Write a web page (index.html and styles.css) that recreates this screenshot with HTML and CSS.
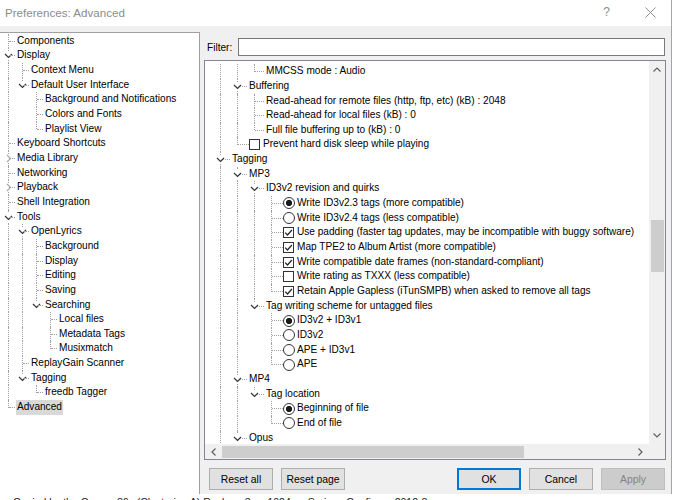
FILE: index.html
```html
<!DOCTYPE html>
<html>
<head>
  <title>Preferences: Advanced</title>
  <link rel="stylesheet" href="styles.css">
</head>
<body>

<div class="window">
  <div class="titlebar">
    <span class="title">Preferences: Advanced</span>
    <span class="help">?</span>
    <svg class="close" width="11" height="11" viewBox="0 0 11 11"><path d="M0.5 0.5l10 10M10.5 0.5l-10 10"/></svg>
  </div>

  <div class="client">
    <div class="nav tree" id="navTree"></div>

    <div class="pane">
      <div class="filter">
        <label for="filter">Filter:</label>
        <input type="text" id="filter" name="filter">
      </div>

      <div class="tree-box">
        <div class="viewport prefs tree" id="prefTree"></div>
        <div class="vscroll">
          <div class="sbtn"><svg width="8" height="5" viewBox="0 0 8 5"><path d="M0.5 4.5l3.5-3.5 3.5 3.5"/></svg></div>
          <div class="vtrack"><div class="vthumb"></div></div>
          <div class="sbtn"><svg width="8" height="5" viewBox="0 0 8 5"><path d="M0.5 0.5l3.5 3.5 3.5-3.5"/></svg></div>
        </div>
        <div class="hscroll">
          <div class="sbtn"><svg width="5" height="8" viewBox="0 0 5 8"><path d="M4.5 0.5l-3.5 3.5 3.5 3.5"/></svg></div>
          <div class="htrack"><div class="hthumb"></div></div>
          <div class="sbtn"><svg width="5" height="8" viewBox="0 0 5 8"><path d="M0.5 0.5l3.5 3.5-3.5 3.5"/></svg></div>
        </div>
        <div class="corner"></div>
      </div>

      <div class="buttons">
        <button type="button">Reset all</button>
        <button type="button">Reset page</button>
        <span class="spacer"></span>
        <button type="button" class="default">OK</button>
        <button type="button">Cancel</button>
        <button type="button" disabled>Apply</button>
      </div>
    </div>
  </div>
</div>

<div class="status">Copied by the Corvax 86s (Clustering A) Rockers 3ms 1024ms Serious Configure 2012-8</div>

<script src="tree.js"></script>
</body>
</html>
```

FILE: styles.css
```css
* {
  box-sizing: border-box;
}

body {
  margin: 0;
  background: #fff;
  font-family: "Liberation Sans", Arial, sans-serif;
  font-size: 10.1px;
  color: #000;
}

.window {
  width: 672px;
  height: 494px;
  border-right: 1px solid #a5a5a5;
  display: flex;
  flex-direction: column;
}

/* title bar */

.titlebar {
  height: 26px;
  display: flex;
  align-items: center;
  padding: 0 15px 2px 5px;
  background: #fff;
}

.title {
  flex: 1;
  color: #8c8c8c;
  font-size: 11.6px;
}

.help {
  color: #8c8c8c;
  font-size: 12px;
  margin-right: 35px;
}

.close path {
  stroke: #8c8c8c;
  stroke-width: 1;
}

/* dialog body */

.client {
  flex: 1;
  display: flex;
  background: #f0f0f0;
  padding-top: 6px;
  min-height: 0;
}

.nav {
  width: 200px;
  background: #fff;
  border-top: 1px solid #a0a0a0;
  border-right: 1px solid #a0a0a0;
  padding: 0.7px 0 0 8px;
  overflow: hidden;
}

.pane {
  flex: 1;
  display: flex;
  flex-direction: column;
  padding: 6px 5px 0 4px;
}

.filter {
  display: flex;
  align-items: center;
  height: 18px;
  padding-left: 3px;
}

.filter label {
  width: 31px;
}

.filter input {
  flex: 1;
  height: 18px;
  margin: 0 1px 0 0;
  border: 1px solid #7a7a7a;
  background: #fff;
  outline: none;
}

.tree-box {
  height: 400px;
  margin-top: 4px;
  border: 1px solid #828790;
  background: #fff;
  display: grid;
  grid-template-columns: 1fr 16px;
  grid-template-rows: 1fr 15px;
}

.viewport {
  padding: 3.2px 0 0 15px;
  overflow: hidden;
}

/* scroll bars */

.vscroll {
  display: flex;
  flex-direction: column;
  background: #f0f0f0;
}

.hscroll {
  display: flex;
  background: #f0f0f0;
}

.sbtn {
  flex: none;
  width: 16px;
  height: 17px;
  display: flex;
  align-items: center;
  justify-content: center;
}

.hscroll .sbtn {
  width: 17px;
  height: 15px;
}

.sbtn path {
  fill: none;
  stroke: #606060;
  stroke-width: 1.2;
}

.vtrack {
  flex: 1;
}

.vthumb {
  width: 13px;
  height: 52px;
  margin: 142px 0 0 2px;
  background: #cdcdcd;
}

.htrack {
  flex: 1;
}

.hthumb {
  width: 302px;
  height: 12px;
  margin-top: 2px;
  background: #cdcdcd;
}

.corner {
  background: #f0f0f0;
}

/* buttons */

.buttons {
  display: flex;
  gap: 8px;
  margin-top: 8px;
  padding: 0 1px 0 5px;
}

.buttons button {
  width: 64px;
  height: 22px;
  padding: 0;
  border: 1px solid #adadad;
  background: #e1e1e1;
  font-family: inherit;
  font-size: 10.4px;
  color: #000;
}

.buttons .default {
  border-color: #0078d7;
  box-shadow: inset 0 0 0 1px #0078d7;
}

.buttons button:disabled {
  border-color: #bfbfbf;
  background: #cccccc;
  color: #838383;
}

.spacer {
  flex: 1;
}

/* tree rows */

.tree {
  white-space: nowrap;
}

.row {
  display: flex;
  align-items: center;
  height: 14.67px;
}

.guide,
.conn {
  flex: none;
  align-self: stretch;
  position: relative;
}

.guide.line {
  border-left: 1px dotted #a0a0a0;
}

.conn::before {
  content: '';
  position: absolute;
  left: 0;
  top: 0;
  bottom: 0;
  border-left: 1px dotted #a0a0a0;
}

.conn.last::before {
  bottom: 7px;
}

.conn::after {
  content: '';
  position: absolute;
  left: 1px;
  right: 2px;
  top: 7px;
  border-top: 1px dotted #a0a0a0;
}

.conn.to-box::after {
  right: 0;
}

.nav .guide {
  width: 14px;
}

.nav .conn {
  width: 9px;
}

.prefs .guide {
  width: 17px;
}

.prefs .conn {
  width: 12px;
}

.exp {
  position: absolute;
  left: -4px;
  top: 3px;
  background: #fff;
}

.exp path {
  fill: none;
  stroke: #333;
  stroke-width: 1.2;
}

.exp.closed path {
  stroke: #a8a8a8;
}

.label {
  line-height: 14.67px;
}

.label.selected {
  background: #d9d9d9;
  margin-left: -1px;
  padding: 0 1px;
}

.check {
  flex: none;
  width: 11px;
  height: 11px;
  margin-right: 3px;
  border: 1px solid #333;
  background: #fff;
  display: flex;
}

.check path {
  fill: none;
  stroke: #222;
  stroke-width: 1.2;
}

.radio {
  flex: none;
  width: 12px;
  height: 12px;
  margin-right: 2px;
  border: 1px solid #333;
  border-radius: 50%;
  background: #fff;
}

.radio.on {
  background: radial-gradient(circle, #1a1a1a 0 2.8px, #fff 3.4px);
}

/* text below the dialog */

.status {
  height: 6px;
  overflow: hidden;
  padding-left: 13px;
  padding-top: 2px;
  line-height: 12px;
  font-size: 10.5px;
  color: #222;
}
```

FILE: tree.js
```js
var navRows = [
  [0, 'Components'],
  [0, 'Display', 'open'],
  [1, 'Context Menu'],
  [1, 'Default User Interface', 'open'],
  [2, 'Background and Notifications'],
  [2, 'Colors and Fonts'],
  [2, 'Playlist View'],
  [0, 'Keyboard Shortcuts'],
  [0, 'Media Library', 'closed'],
  [0, 'Networking'],
  [0, 'Playback', 'closed'],
  [0, 'Shell Integration'],
  [0, 'Tools', 'open'],
  [1, 'OpenLyrics', 'open'],
  [2, 'Background'],
  [2, 'Display'],
  [2, 'Editing'],
  [2, 'Saving'],
  [2, 'Searching', 'open'],
  [3, 'Local files'],
  [3, 'Metadata Tags'],
  [3, 'Musixmatch'],
  [1, 'ReplayGain Scanner'],
  [1, 'Tagging', 'open'],
  [2, 'freedb Tagger'],
  [0, 'Advanced', 'sel']
];

// the advanced page is scrolled: it starts in the middle of "Playback"
// and goes on below "Opus"
var prefRows = [
  [2, 'MMCSS mode : Audio'],
  [1, 'Buffering', 'open'],
  [2, 'Read-ahead for remote files (http, ftp, etc) (kB) : 2048'],
  [2, 'Read-ahead for local files (kB) : 0'],
  [2, 'Full file buffering up to (kB) : 0'],
  [1, 'Prevent hard disk sleep while playing', 'cb', false],
  [0, 'Tagging', 'open'],
  [1, 'MP3', 'open'],
  [2, 'ID3v2 revision and quirks', 'open'],
  [3, 'Write ID3v2.3 tags (more compatible)', 'rb', true],
  [3, 'Write ID3v2.4 tags (less compatible)', 'rb', false],
  [3, 'Use padding (faster tag updates, may be incompatible with buggy software)', 'cb', true],
  [3, 'Map TPE2 to Album Artist (more compatible)', 'cb', true],
  [3, 'Write compatible date frames (non-standard-compliant)', 'cb', true],
  [3, 'Write rating as TXXX (less compatible)', 'cb', false],
  [3, 'Retain Apple Gapless (iTunSMPB) when asked to remove all tags', 'cb', true],
  [2, 'Tag writing scheme for untagged files', 'open'],
  [3, 'ID3v2 + ID3v1', 'rb', true],
  [3, 'ID3v2', 'rb', false],
  [3, 'APE + ID3v1', 'rb', false],
  [3, 'APE', 'rb', false],
  [1, 'MP4', 'open'],
  [2, 'Tag location', 'open'],
  [3, 'Beginning of file', 'rb', true],
  [3, 'End of file', 'rb', false],
  [1, 'Opus', 'open']
];
var prefTail = [2, 1, 0];

var tick = '<svg width="9" height="9" viewBox="0 0 9 9"><path d="M1.2 4.6l2.3 2.4 4.4-5"/></svg>';

// does the sibling list at this depth go on below row i?
function continues(depths, i, depth) {
  for (var j = i + 1; j < depths.length; j++) {
    if (depths[j] < depth) return false;
    if (depths[j] === depth) return true;
  }
  return false;
}

function chevron(kind) {
  var d = kind === 'closed' ? 'M3 1l3.5 3.5-3.5 3.5' : 'M1 3l3.5 3.5 3.5-3.5';
  return '<svg class="exp ' + kind + '" width="9" height="9" viewBox="0 0 9 9"><path d="' + d + '"/></svg>';
}

function buildTree(el, rows, tail) {
  var depths = rows.map(function (r) { return r[0]; }).concat(tail || []);

  rows.forEach(function (r, i) {
    var depth = r[0];
    var kind = r[2] || '';
    var html = '';

    for (var k = 0; k < depth; k++) {
      html += '<span class="guide' + (continues(depths, i, k) ? ' line' : '') + '"></span>';
    }

    var conn = 'conn' + (continues(depths, i, depth) ? '' : ' last');
    if (kind === 'cb' || kind === 'rb') conn += ' to-box';
    html += '<span class="' + conn + '">' + (kind === 'open' || kind === 'closed' ? chevron(kind) : '') + '</span>';

    if (kind === 'cb') html += '<span class="check">' + (r[3] ? tick : '') + '</span>';
    if (kind === 'rb') html += '<span class="radio' + (r[3] ? ' on' : '') + '"></span>';

    html += '<span class="label' + (kind === 'sel' ? ' selected' : '') + '">' + r[1] + '</span>';

    var row = document.createElement('div');
    row.className = 'row';
    row.innerHTML = html;
    el.appendChild(row);
  });
}

buildTree(document.getElementById('navTree'), navRows);
buildTree(document.getElementById('prefTree'), prefRows, prefTail);
```
